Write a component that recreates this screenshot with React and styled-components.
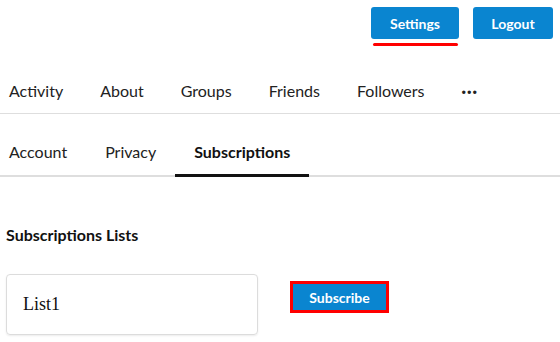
import React from "react";
import styled, { createGlobalStyle } from "styled-components";

const Global = createGlobalStyle`
  html, body { margin: 0; padding: 0; background: #fff; }
  body { font-family: Lato, "Open Sans", sans-serif; color: #222; }
  * { box-sizing: border-box; }
`;

const Page = styled.div`
  width: 560px;
  height: 342px;
  overflow: hidden;
`;

const TopBar = styled.div`
  display: flex;
  justify-content: flex-end;
  gap: 14px;
  padding: 7px 7px 0 0;
  height: 46px;
`;

const Btn = styled.button`
  position: relative;
  height: 32px;
  width: ${(p) => p.$w}px;
  border: none;
  border-radius: 3px;
  background: #0a85d0;
  color: #fff;
  font-family: Lato, sans-serif;
  font-weight: 700;
  font-size: 14px;
  cursor: pointer;
  padding: 0;
  &::after {
    content: "";
    display: ${(p) => (p.$marked ? "block" : "none")};
    position: absolute;
    left: 2px;
    right: 1px;
    bottom: -7px;
    height: 3px;
    border-radius: 2px;
    background: #f00;
  }
`;

const Nav = styled.nav`
  display: flex;
  align-items: flex-end;
  height: 68px;
  padding: 0 0 12px 9px;
  gap: 37px;
  border-bottom: 1px solid #dedede;
`;

const NavItem = styled.a`
  font-size: 16px;
  line-height: 20px;
  color: #222;
  text-decoration: none;
  font-weight: ${(p) => (p.$bold ? 900 : 400)};
  letter-spacing: ${(p) => (p.$bold ? "1px" : "0")};
`;

const Tabs = styled.div`
  display: flex;
  height: 63px;
  align-items: flex-end;
  border-bottom: 2px solid #dedede;
`;

const Tab = styled.a`
  padding: 0 19px 12px;
  margin-bottom: -2px;
  font-size: 16px;
  line-height: 20px;
  color: ${(p) => (p.$active ? "#111" : "#222")};
  font-weight: ${(p) => (p.$active ? 700 : 400)};
  border-bottom: 3px solid ${(p) => (p.$active ? "#111" : "transparent")};
  &:first-child { padding-left: 9px; }
`;

const Section = styled.section`
  padding: 48px 0 0 6px;
`;

const Heading = styled.h3`
  margin: 0;
  font-size: 16px;
  line-height: 20px;
  font-weight: 700;
  color: #111;
`;

const Row = styled.div`
  display: flex;
  align-items: flex-start;
  gap: 32px;
  margin-top: 29px;
`;

const Card = styled.div`
  width: 252px;
  height: 61px;
  border: 1px solid #dcdcdc;
  border-radius: 4px;
  box-shadow: 0 1px 2px rgba(0, 0, 0, 0.08);
  display: flex;
  align-items: center;
  padding-left: 16px;
  font-family: "Liberation Serif", "DejaVu Serif", serif;
  font-size: 18px;
  color: #111;
`;

const SubscribeBtn = styled.button`
  margin-top: 7px;
  width: 99px;
  height: 32px;
  border: 3px solid #f00;
  background: #0a85d0;
  color: #fff;
  font-family: Lato, sans-serif;
  font-weight: 700;
  font-size: 14px;
  padding: 0;
`;

export default function App() {
  return (
    <Page>
      <Global />
      <TopBar>
        <Btn $w={88} $marked>Settings</Btn>
        <Btn $w={80}>Logout</Btn>
      </TopBar>
      <Nav>
        <NavItem>Activity</NavItem>
        <NavItem>About</NavItem>
        <NavItem>Groups</NavItem>
        <NavItem>Friends</NavItem>
        <NavItem>Followers</NavItem>
        <NavItem $bold>···</NavItem>
      </Nav>
      <Tabs>
        <Tab>Account</Tab>
        <Tab>Privacy</Tab>
        <Tab $active>Subscriptions</Tab>
      </Tabs>
      <Section>
        <Heading>Subscriptions Lists</Heading>
        <Row>
          <Card>List1</Card>
          <SubscribeBtn>Subscribe</SubscribeBtn>
        </Row>
      </Section>
    </Page>
  );
}
